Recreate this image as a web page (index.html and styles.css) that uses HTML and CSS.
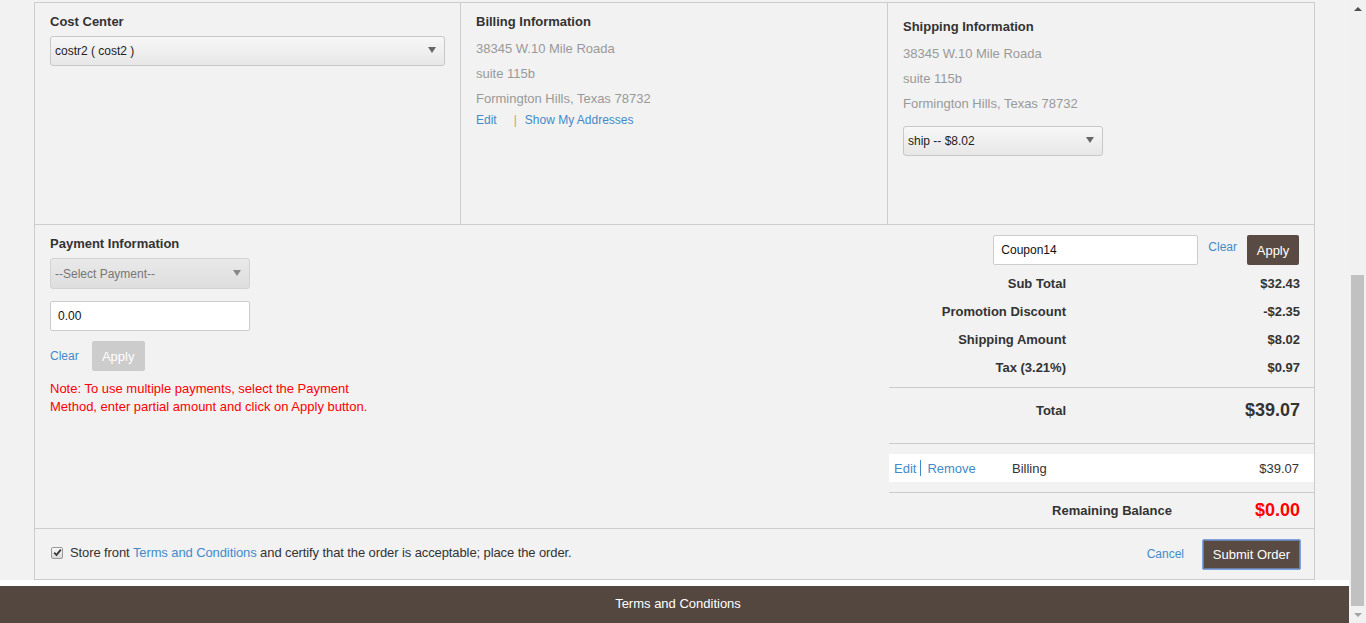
FILE: index.html
```html
<!DOCTYPE html>
<html>
<head>
<meta charset="utf-8">
<title>Checkout</title>
<link rel="stylesheet" href="styles.css">
</head>
<body>
<div class="screen">
  <div class="main">
    <div class="page">
      <div class="container">
        <div class="row row-top">
          <div class="cell">
            <h3 class="heading">Cost Center</h3>
            <div class="select select-cost"><span>costr2 ( cost2 )</span><span class="caret"></span></div>
          </div>
          <div class="cell">
            <h3 class="heading">Billing Information</h3>
            <div class="address">
              <div>38345 W.10 Mile Roada</div>
              <div>suite 115b</div>
              <div>Formington Hills, Texas 78732</div>
            </div>
            <div class="addr-links"><a class="link">Edit</a><span class="sep">|</span><a class="link">Show My Addresses</a></div>
          </div>
          <div class="cell cell-ship">
            <h3 class="heading">Shipping Information</h3>
            <div class="address">
              <div>38345 W.10 Mile Roada</div>
              <div>suite 115b</div>
              <div>Formington Hills, Texas 78732</div>
            </div>
            <div class="select select-ship"><span>ship -- $8.02</span><span class="caret"></span></div>
          </div>
        </div>
        <div class="row row-mid">
          <div class="cell payment">
            <h3 class="heading">Payment Information</h3>
            <div class="select select-pay disabled"><span>--Select Payment--</span><span class="caret"></span></div>
            <div class="input input-amount">0.00</div>
            <div class="pay-actions"><a class="link">Clear</a><span class="btn btn-disabled">Apply</span></div>
            <p class="note">Note: To use multiple payments, select the Payment<br>Method, enter partial amount and click on Apply button.</p>
          </div>
          <div class="summary">
            <div class="coupon-block">
              <div class="coupon">
                <div class="input input-coupon">Coupon14</div>
                <a class="link coupon-clear">Clear</a>
                <span class="btn btn-dark">Apply</span>
              </div>
              <div class="sum-row"><span class="sum-label">Sub Total</span><span class="sum-value">$32.43</span></div>
              <div class="sum-row"><span class="sum-label">Promotion Discount</span><span class="sum-value">-$2.35</span></div>
              <div class="sum-row"><span class="sum-label">Shipping Amount</span><span class="sum-value">$8.02</span></div>
              <div class="sum-row"><span class="sum-label">Tax (3.21%)</span><span class="sum-value">$0.97</span></div>
            </div>
            <div class="total-block">
              <div class="sum-row"><span class="sum-label">Total</span><span class="sum-value big">$39.07</span></div>
            </div>
            <div class="paid-block">
              <div class="paid-row">
                <span class="paid-links"><a class="link">Edit</a><span class="bar"></span><a class="link">Remove</a></span>
                <span class="paid-name">Billing</span>
                <span class="paid-amount">$39.07</span>
              </div>
            </div>
            <div class="remaining-block">
              <span class="remaining-label">Remaining Balance</span>
              <span class="sum-value big red">$0.00</span>
            </div>
          </div>
        </div>
        <div class="row row-bottom">
          <label class="agree">
            <span class="checkbox"><svg width="9" height="9" viewBox="0 0 9 9"><path d="M1.2 4.6 L3.5 7 L7.8 1.6" fill="none" stroke="#333" stroke-width="1.8"/></svg></span>
            <span class="agree-text">Store front <a class="link">Terms and Conditions</a> and certify that the order is acceptable; place the order.</span>
          </label>
          <div class="submit-actions">
            <a class="link">Cancel</a>
            <span class="btn btn-dark btn-submit">Submit Order</span>
          </div>
        </div>
      </div>
    </div>
    <div class="footer">Terms and Conditions</div>
  </div>
  <div class="scrollbar">
    <div class="sb-btn"><span class="sb-up"></span></div>
    <div class="sb-space"></div>
    <div class="sb-thumb"></div>
    <div class="sb-btn"><span class="sb-down"></span></div>
  </div>
</div>
</body>
</html>
```

FILE: styles.css
```css
* { box-sizing: border-box; }
html, body { margin: 0; padding: 0; }
body {
  font-family: "Liberation Sans", Arial, sans-serif;
  font-size: 13px;
  color: #333;
  background: #fff;
  height: 623px;
  overflow: hidden;
}
.screen { display: flex; height: 623px; }
.main { flex: 1; display: flex; flex-direction: column; min-width: 0; }
.page { background: #f2f2f2; padding: 2px 0 0 34px; }
.container {
  width: 1281px;
  border: 1px solid #ccc;
  background: #f2f2f2;
}
.row { display: grid; }
.row-top {
  grid-template-columns: 426px 427px 1fr;
  height: 222px;
  border-bottom: 1px solid #ccc;
}
.row-top .cell { border-right: 1px solid #ccc; }
.row-top .cell:last-child { border-right: none; }
.row-mid {
  grid-template-columns: 854px 1fr;
  height: 304px;
  border-bottom: 1px solid #ccc;
}
.cell { padding: 10px 15px; }
.cell-ship { padding-top: 15px; }
.heading {
  margin: 0 0 5px;
  font-size: 13px;
  line-height: 18px;
  font-weight: bold;
  color: #333;
}
.link { color: #428bca; text-decoration: none; cursor: pointer; }
.address { color: #999; line-height: 25px; font-size: 13px; }
.addr-links { font-size: 12px; line-height: 17px; display: flex; margin-top: 1px; }
.addr-links .sep { color: #c0a47a; margin: 0 8px 0 17px; }

.select {
  display: flex;
  align-items: center;
  justify-content: space-between;
  height: 30px;
  padding: 0 8px 0 4px;
  border: 1px solid #c8c8c8;
  border-radius: 3px;
  background: linear-gradient(#f7f7f7, #e7e7e7);
  font-size: 12px;
  color: #222;
}
.caret {
  width: 0; height: 0;
  border-left: 4px solid transparent;
  border-right: 4px solid transparent;
  border-top: 6px solid #666;
  margin-top: -2px;
}
.select-cost { width: 395px; }
.select-ship { width: 200px; margin-top: 10px; }
.select-pay { width: 200px; height: 31px; }
.select.disabled { background: linear-gradient(#e9e9e9, #dedede); color: #777; border-color: #d2d2d2; }
.select.disabled .caret { border-top-color: #888; }

.input {
  display: flex;
  align-items: center;
  height: 30px;
  background: #fff;
  border: 1px solid #ccc;
  border-radius: 2px;
  font-size: 12px;
  color: #111;
  padding-left: 7px;
}
.input-amount { width: 200px; margin-top: 12px; }
.pay-actions { display: flex; align-items: center; gap: 13px; margin-top: 10px; font-size: 12px; }
.btn {
  display: inline-flex;
  align-items: center;
  justify-content: center;
  height: 30px;
  padding: 0;
  border-radius: 2px;
  color: #fff;
  font-size: 13px;
  white-space: nowrap;
}
.btn-disabled { background: #ccc; width: 53px; }
.btn-dark { background: #594b43; }
.note { margin: 9px 0 0; color: #f00; font-size: 13px; line-height: 18px; }

.summary { display: flex; flex-direction: column; }
.coupon-block { padding: 10px 0 6px; border-bottom: 1px solid #ccc; }
.coupon { display: flex; justify-content: flex-end; align-items: flex-start; gap: 10px; padding-right: 15px; margin-bottom: 4px; }
.input-coupon { width: 205px; }
.coupon-clear { font-size: 12px; line-height: 24px; }
.coupon .btn-dark { width: 52px; }
.sum-row { display: flex; align-items: center; height: 28px; font-weight: bold; }
.sum-label { width: 177px; text-align: right; }
.sum-value { flex: 1; text-align: right; padding-right: 14px; font-weight: bold; }
.big { font-size: 18px; }
.red { color: #f00; }
.total-block { height: 56px; padding-top: 8px; border-bottom: 1px solid #ccc; }
.paid-block { height: 49px; padding: 10px 0; border-bottom: 1px solid #ccc; }
.paid-row { display: flex; align-items: center; height: 28px; background: #fff; padding: 0 15px 0 5px; font-size: 13px; }
.paid-links { width: 118px; display: flex; align-items: center; }
.paid-links .bar { display: inline-block; width: 1px; height: 16px; background: #428bca; margin: 0 6px 0 4px; }
.paid-name { flex: 1; }
.paid-amount { text-align: right; }
.remaining-block { flex: 1; display: flex; align-items: center; }
.remaining-label { width: 283px; text-align: right; font-weight: bold; }

.row-bottom {
  display: flex;
  align-items: center;
  justify-content: space-between;
  height: 50px;
  padding: 0 13px 0 16px;
}
.agree { display: flex; align-items: center; gap: 7px; font-size: 13px; margin-bottom: 3px; }
.agree-text { letter-spacing: -0.1px; }
.checkbox {
  width: 12px; height: 12px;
  border: 1px solid #999;
  border-radius: 2px;
  background: linear-gradient(#fafafa, #d8d8d8);
  display: flex; align-items: center; justify-content: center;
}
.submit-actions { display: flex; align-items: center; gap: 18px; font-size: 12px; }
.btn-submit {
  height: 31px;
  width: 99px;
  border: 1px solid #7da2de;
  box-shadow: inset 0 0 0 1px #6a7fa8;
}

.footer {
  margin-top: 6px;
  height: 38px;
  background: #54473f;
  color: #fff;
  font-size: 13px;
  line-height: 36px;
  text-align: center;
  padding-left: 7px;
}

.scrollbar { width: 17px; background: #f1f1f1; display: flex; flex-direction: column; }
.sb-btn { height: 17px; display: flex; align-items: center; justify-content: center; }
.sb-up { width: 0; height: 0; border-left: 4px solid transparent; border-right: 4px solid transparent; border-bottom: 4px solid #505050; }
.sb-down { width: 0; height: 0; border-left: 4px solid transparent; border-right: 4px solid transparent; border-top: 4px solid #a3a3a3; }
.sb-space { flex: 1; }
.sb-thumb { height: 331px; margin: 0 2px; background: #c1c1c1; }
```
